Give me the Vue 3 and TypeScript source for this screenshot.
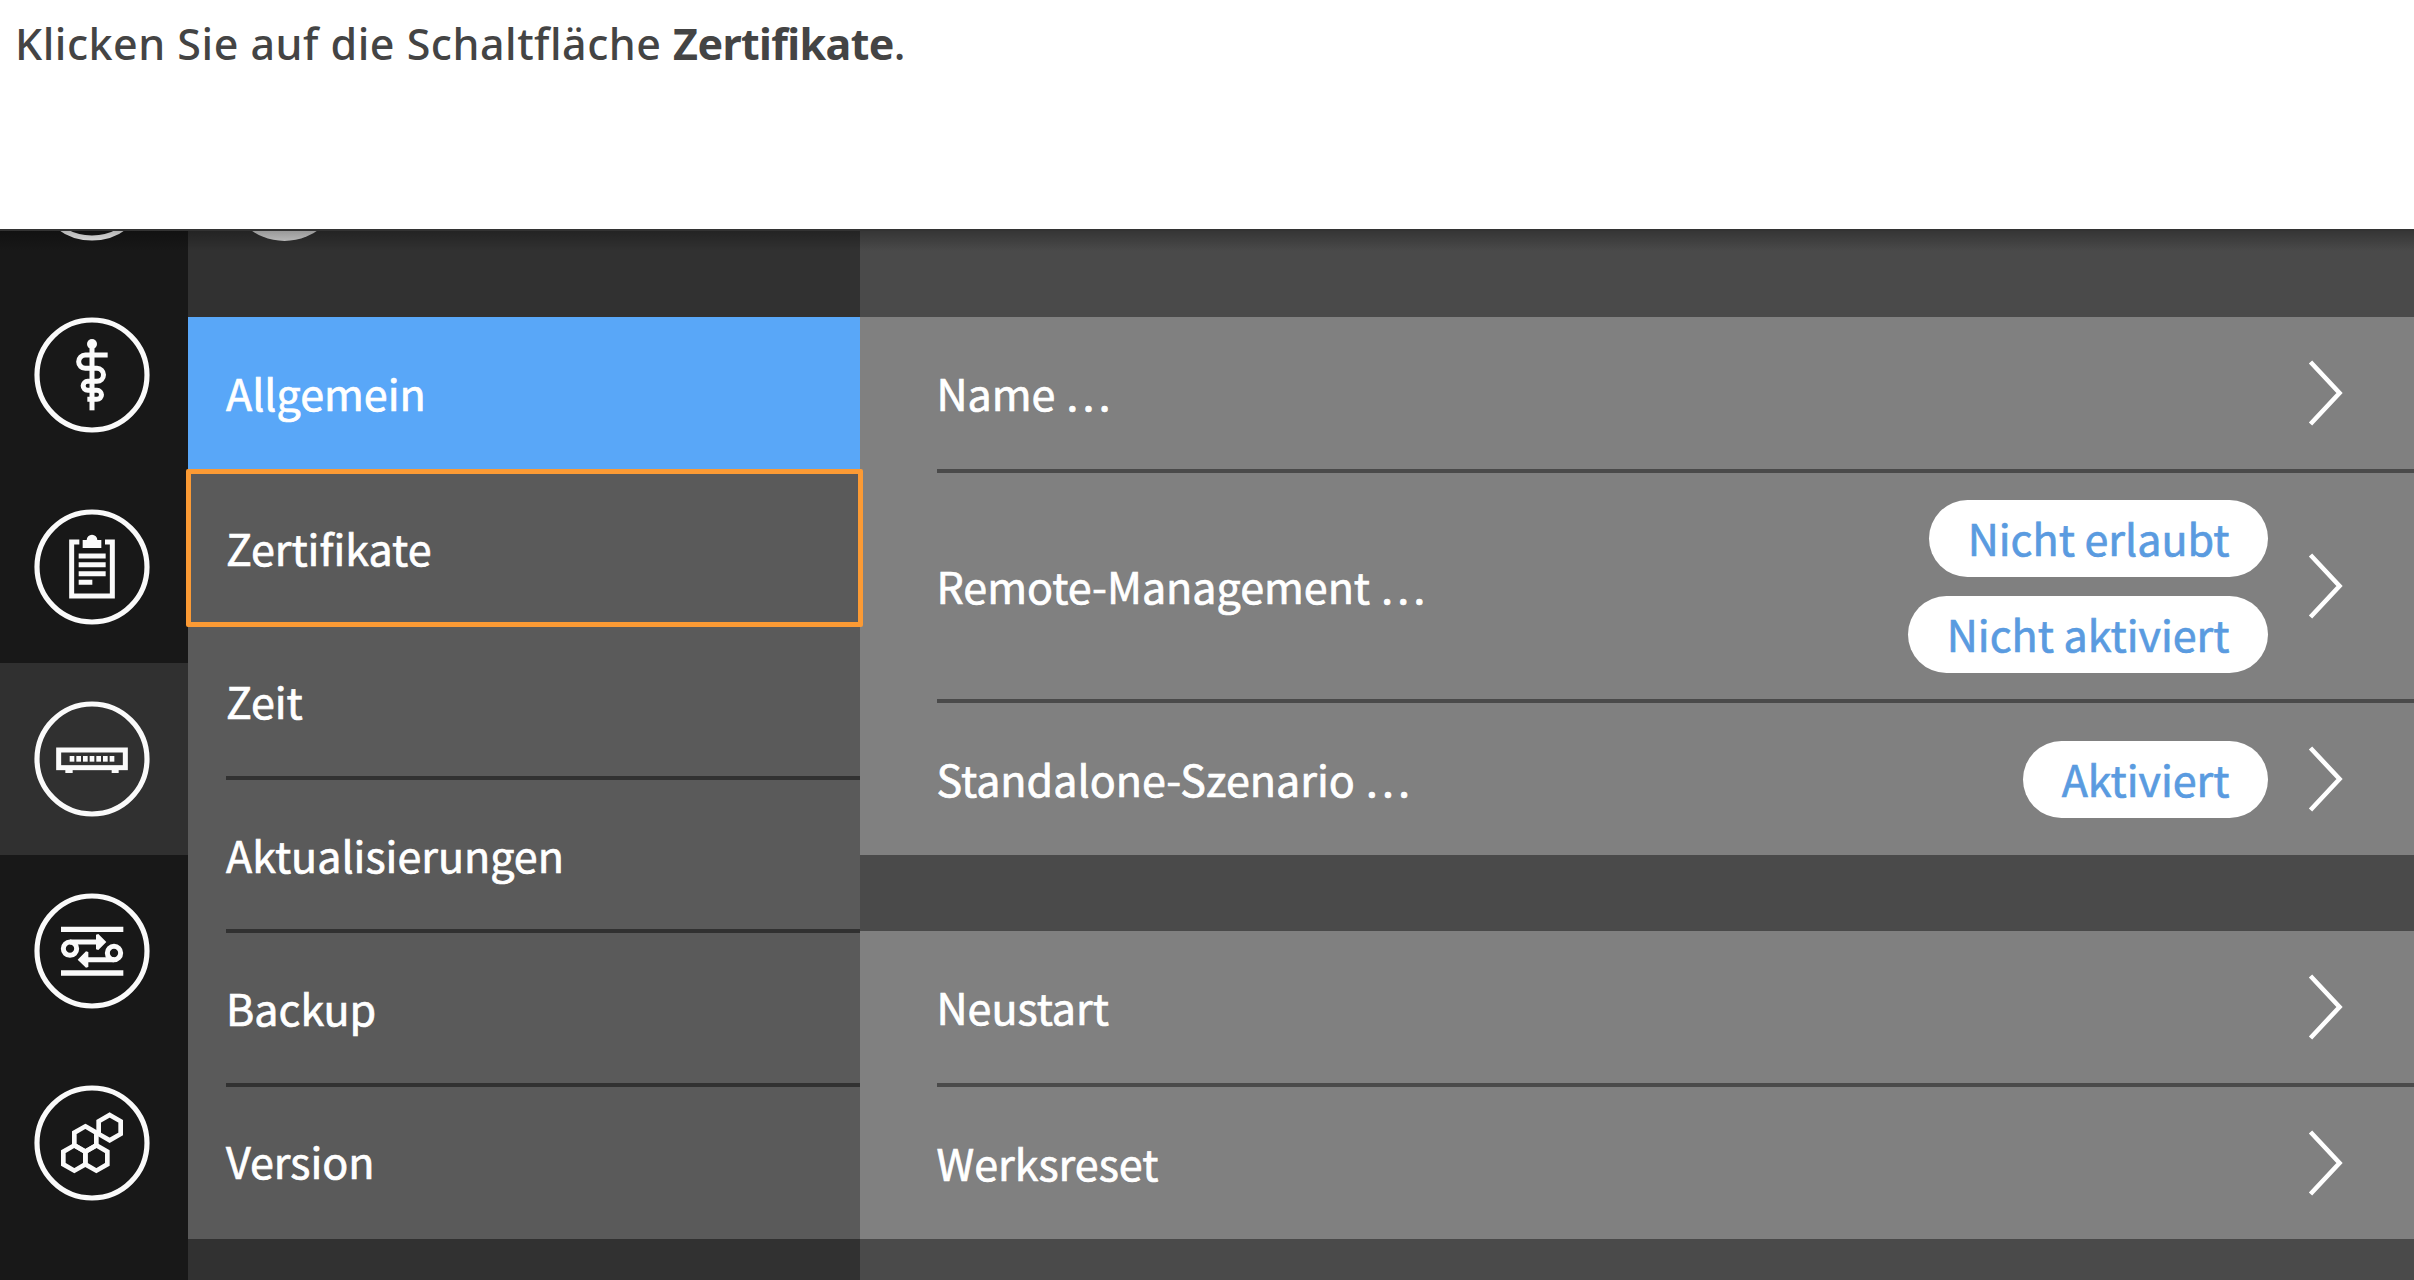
<script setup lang="ts">
type IconName = 'none' | 'medical' | 'clipboard' | 'router' | 'transfer' | 'cells'

interface NavEntry {
  icon: IconName
  active?: boolean
}

interface SettingRow {
  label: string
  badges?: string[]
  tall?: boolean
}

const navEntries: NavEntry[] = [
  { icon: 'none' },
  { icon: 'medical' },
  { icon: 'clipboard' },
  { icon: 'router', active: true },
  { icon: 'transfer' },
  { icon: 'cells' },
]

const menuItems: string[] = ['Allgemein', 'Zertifikate', 'Zeit', 'Aktualisierungen', 'Backup', 'Version']
const activeItem = 'Allgemein'
const markedItem = 'Zertifikate'

const groups: SettingRow[][] = [
  [
    { label: 'Name …' },
    { label: 'Remote-Management …', badges: ['Nicht erlaubt', 'Nicht aktiviert'], tall: true },
    { label: 'Standalone-Szenario …', badges: ['Aktiviert'] },
  ],
  [{ label: 'Neustart' }, { label: 'Werksreset' }],
]

// Pointy-top hexagon around a centre point
const hexagon = (cx: number, cy: number): string =>
  [[0, -38], [33, -19], [33, 19], [0, 38], [-33, 19], [-33, -19]]
    .map(([x, y]) => `${cx + x},${cy + y}`)
    .join(' ')

const hexagons: string[] = [hexagon(53, -46), hexagon(-20, -12), hexagon(-53, 45), hexagon(13, 45)]
const ports: number[] = [0, 1, 2, 3, 4, 5, 6]
</script>

<template>
  <div class="page">
    <p class="instruction">
      <span class="lead">Klicken Sie auf die Schaltfläche </span><strong>Zertifikate</strong>.
    </p>

    <div class="device">
      <nav class="rail">
        <div
          v-for="(entry, index) in navEntries"
          :key="index"
          class="rail-cell"
          :class="{ active: entry.active }"
        >
          <svg class="rail-icon" viewBox="-174 -174 348 348" fill="none" stroke="#fafafa" stroke-width="15">
            <circle r="165" stroke-width="15.5" />
            <g v-if="entry.icon === 'medical'">
              <circle cy="-93" r="15" fill="#fafafa" stroke="none" />
              <path d="M0 -93V106" />
              <path d="M47 -60H-20a20 20 0 0 0 0 40H15a19.500 19.500 0 0 1 0 39H-13a13.500 13.500 0 0 0 0 27H15a13.500 13.500 0 0 1 0 27H-14" />
            </g>
            <g v-else-if="entry.icon === 'clipboard'">
              <path d="M-38 -75H-61V87H61V-75H39" />
              <path d="M-28 -81H-16A16 16 0 0 1 16 -81H28V-57H-28Z" fill="#fafafa" stroke="none" />
              <path d="M-40 -33H41M-40 -7H41M-40 20H41M-40 46H1" />
            </g>
            <g v-else-if="entry.icon === 'router'">
              <rect x="-100" y="-27" width="200" height="53" />
              <path d="M-80 37H-58M59 37H80" stroke-width="10" />
              <rect
                v-for="port in ports"
                :key="port"
                :x="-67 + port * 20"
                y="-9"
                width="14"
                height="17"
                fill="#fafafa"
                stroke="none"
              />
            </g>
            <g v-else-if="entry.icon === 'transfer'">
              <path d="M-93 -65H94M-93 66H94" stroke-width="16" />
              <circle cx="-66" cy="-7" r="20" />
              <circle cx="66" cy="6" r="20" />
              <path d="M-66 -27H18M66 26H-18" />
              <path d="M12 -49L19 -51L43 -27L19 -3L12 -5ZM-11 3L-18 1L-43 26L-18 50L-11 48Z" fill="#fafafa" stroke="none" />
            </g>
            <g v-else-if="entry.icon === 'cells'">
              <polygon v-for="points in hexagons" :key="points" :points="points" stroke-width="14" />
            </g>
          </svg>
        </div>
      </nav>

      <aside class="menu">
        <div class="menu-head"><span class="avatar"></span></div>
        <ul class="menu-list">
          <li
            v-for="item in menuItems"
            :key="item"
            class="menu-item"
            :class="{ active: item === activeItem, marked: item === markedItem }"
          >
            <span class="text">{{ item }}</span>
          </li>
        </ul>
      </aside>

      <main class="content">
        <section v-for="(rows, index) in groups" :key="index" class="group">
          <div v-for="row in rows" :key="row.label" class="row" :class="{ tall: row.tall }">
            <span class="text">{{ row.label }}</span>
            <div class="badges">
              <span v-for="badge in row.badges" :key="badge" class="badge"><span class="text">{{ badge }}</span></span>
            </div>
            <svg class="chevron" viewBox="0 0 36 70" fill="none" stroke="#fff" stroke-width="4.600">
              <path d="M2.500 4L31.500 35L2.500 66" />
            </svg>
          </div>
        </section>
      </main>
    </div>
  </div>
</template>

<style>
body {
  margin: 0;
  background: #fff;
}
</style>

<style scoped>
.page {
  width: 2414px;
  height: 1280px;
  overflow: hidden;
  display: flex;
  flex-direction: column;
  background: #fff;
  font-family: 'Noto Sans CJK SC', 'Noto Sans', sans-serif;
}

.instruction {
  box-sizing: border-box;
  height: 229px;
  flex: none;
  margin: 0;
  padding: 14px 0 0 15px;
  font-family: 'Noto Sans', sans-serif;
  font-size: 43px;
  font-weight: 500;
  line-height: 60px;
  color: #444;
}

.lead {
  letter-spacing: 0.500px;
}

.instruction strong {
  font-weight: 700;
  letter-spacing: -0.620px;
}

.device {
  position: relative;
  flex: 1;
  min-height: 0;
  display: flex;
  overflow: hidden;
  background: #4a4a4a;
}

.device::before {
  content: '';
  position: absolute;
  z-index: 3;
  inset: 0 0 auto;
  height: 20px;
  border-top: 2px solid #333;
  background: linear-gradient(rgba(0, 0, 0, 0.28), rgba(0, 0, 0, 0));
}

.rail {
  width: 188px;
  flex: none;
  margin-top: -142px;
  background: #181818;
}

.rail-cell {
  height: 192px;
  display: flex;
  align-items: center;
  padding-left: 34px;
}

.rail-cell.active {
  background: #303030;
}

.rail-icon {
  width: 116px;
  height: 116px;
}

.menu {
  width: 671.500px;
  flex: none;
  background: #313131;
}

.menu-head {
  height: 88.300px;
  display: flex;
  align-items: flex-start;
}

.avatar {
  width: 115px;
  height: 115px;
  margin: -103px 0 0 38.500px;
  border-radius: 50%;
  background: #d4d4d4;
}

.menu-list {
  margin: 0;
  padding: 0;
  list-style: none;
  background: #5a5a5a;
}

.menu-item {
  box-sizing: border-box;
  position: relative;
  height: 149.700px;
  padding: 0 0 2px 38px;
  display: flex;
  align-items: center;
}

.menu-item:first-child,
.menu-item:last-child {
  height: 151.700px;
}

.menu-item:last-child {
  padding-bottom: 5px;
}

.menu-item + .menu-item {
  margin-top: 3.840px;
}

.menu-item + .menu-item::before {
  content: '';
  position: absolute;
  left: 38px;
  right: 0;
  top: -4px;
  height: 4px;
  background: #313131;
}

.menu-item.active {
  background: #59a7f8;
}

.menu-item.marked::after {
  content: '';
  position: absolute;
  z-index: 2;
  inset: -4px -3px -4.500px -2.500px;
  border: 5px solid #fb9a34;
  border-radius: 2px;
}

.text {
  font-size: 43px;
  font-weight: 400;
  line-height: 60px;
  color: #fff;
  white-space: nowrap;
  -webkit-text-stroke: 0.700px currentColor;
}

.content {
  flex: 1;
  min-width: 0;
  padding-top: 88.300px;
  display: flex;
  flex-direction: column;
  gap: 76.500px;
}

.group {
  background: #808080;
}

.row {
  position: relative;
  height: 151.700px;
  padding: 0 70px 0 77px;
  display: flex;
  align-items: center;
}

.row > .text {
  padding-bottom: 2px;
}

.row.tall {
  height: 226px;
}

.row + .row {
  margin-top: 4px;
}

.row + .row::before {
  content: '';
  position: absolute;
  left: 77px;
  right: 0;
  top: -4px;
  height: 4px;
  background: #4a4a4a;
}

.badges {
  margin-left: auto;
  padding-top: 1px;
  display: flex;
  flex-direction: column;
  align-items: flex-end;
  gap: 19px;
}

.badge {
  box-sizing: border-box;
  height: 77px;
  padding: 0 38.500px 2px;
  display: flex;
  align-items: center;
  border-radius: 38.500px;
  background: #fff;
}

.badge .text {
  color: #5a9be0;
}

.chevron {
  width: 36px;
  height: 70px;
  margin-left: 40px;
}
</style>
